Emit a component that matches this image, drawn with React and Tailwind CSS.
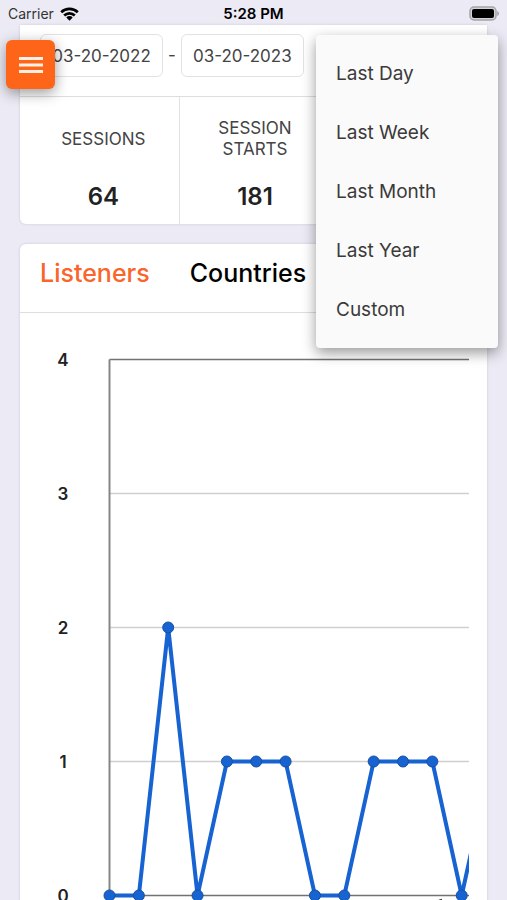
import React from 'react';

const RANGES = ['Last Day', 'Last Week', 'Last Month', 'Last Year', 'Custom'];

const STATS = [
  { label: 'SESSIONS', value: 64 },
  { label: 'SESSION STARTS', value: 181 },
];

const LISTENERS = [0, 0, 2, 0, 1, 1, 1, 0, 0, 1, 1, 1, 0, 1];

const STEP_X = 29.35;
const STEP_Y = 134;
const MAX_VALUE = 4;
const AXIS_X = 69.5;
const TOP_Y = 46.5;

const pointX = (index) => AXIS_X + index * STEP_X;
const valueY = (value) => TOP_Y + (MAX_VALUE - value) * STEP_Y;

const StatusBar = () => (
  <header className="grid h-[25px] grid-cols-3 items-center px-2 pt-[2px] leading-5 text-black">
    <div className="flex items-center gap-[6px] text-sm">
      <span className="text-[#333]">Carrier</span>
      <svg width="19" height="14" viewBox="0 0 19 14" aria-hidden="true">
        <g fill="none" stroke="currentColor" strokeWidth="2.7">
          <path d="M1.2 5.2a12 12 0 0 1 16.6 0" />
          <path d="M4.2 8.5a7.6 7.6 0 0 1 10.6 0" />
        </g>
        <path d="M6.3 10.4a4.6 4.6 0 0 1 6.4 0L9.5 13.7z" fill="currentColor" />
      </svg>
    </div>
    <span className="text-center text-[15px] font-semibold">5:28 PM</span>
    <svg className="justify-self-end" width="30" height="15" viewBox="0 0 30 15" aria-hidden="true">
      <rect x="1" y="1" width="26" height="13" rx="4" fill="#d4d3d8" stroke="#a5a4a9" strokeWidth="1.5" />
      <rect x="3" y="3" width="22" height="9" rx="2" fill="#000" />
      <path d="M28.2 5v5c1.2-.4 1.800-1.300 1.800-2.500s-.6-2.100-1.800-2.500z" fill="#a5a4a9" />
    </svg>
  </header>
);

const DateField = ({ label, value }) => (
  <input
    type="text"
    aria-label={label}
    defaultValue={value}
    className="h-[43px] w-[123px] rounded-md border border-[#e2e2e2] bg-white text-center text-[17px] text-[#444] focus:outline-none"
  />
);

const MenuButton = () => (
  <button
    type="button"
    aria-label="Open menu"
    className="absolute top-10 left-[6px] flex h-[49px] w-[49px] items-center justify-center rounded-md bg-[#ff6519] text-[#fff0e6] shadow-[0_4px_14px_rgba(0,0,0,0.4)]"
  >
    <svg width="24" height="18" viewBox="0 0 24 18" fill="none" stroke="currentColor" strokeWidth="2.8" aria-hidden="true">
      <path d="M0 2.500h24M0 9h24M0 15.500h24" />
    </svg>
  </button>
);

const RangeMenu = () => (
  <ul
    role="menu"
    className="absolute top-[35px] right-[9px] w-[182px] rounded-sm bg-[#fafafa] pt-[10px] pb-2 shadow-[0_5px_14px_rgba(0,0,0,0.4)]"
  >
    {RANGES.map((range) => (
      <li key={range} role="none">
        <button type="button" role="menuitem" className="block h-[59px] w-full px-5 text-left text-[19px] text-[#3a3a3a]">
          {range}
        </button>
      </li>
    ))}
  </ul>
);

const ListenersChart = () => {
  const line = LISTENERS.map((value, index) => `${pointX(index)},${valueY(value)}`).join(' ');

  return (
    <div className="mr-[18px] ml-5 overflow-hidden">
      <svg width="480" height="640" className="max-w-none" role="img" aria-label="Listeners">
        {[0, 1, 2, 3, 4].map((value) => (
          <g key={value}>
            <line
              x1={AXIS_X}
              x2="480"
              y1={valueY(value)}
              y2={valueY(value)}
              stroke={value === 0 || value === MAX_VALUE ? '#6f7173' : '#cfcfcf'}
              strokeWidth="1.5"
            />
            <text x="23" y={valueY(value) + 6} textAnchor="middle" className="fill-[#222] text-[17px] font-semibold">
              {value}
            </text>
          </g>
        ))}
        <line x1={AXIS_X} x2={AXIS_X} y1={valueY(MAX_VALUE)} y2={valueY(0)} stroke="#858787" strokeWidth="2" />
        <path d="M399 587.500l3-1" stroke="#333" strokeWidth="1.5" />
        <polyline points={line} fill="none" stroke="#1763d2" strokeWidth="4" />
        {LISTENERS.map((value, index) => (
          <circle key={index} cx={pointX(index)} cy={valueY(value)} r="5.500" fill="#1763d2" stroke="#184f9f" strokeWidth="1" />
        ))}
      </svg>
    </div>
  );
};

const App = () => {
  return (
    <div className="relative h-screen overflow-hidden bg-[#ecebf5] font-['Inter','Liberation_Sans',sans-serif]">
      <StatusBar />
      <main className="flex flex-col gap-5 px-5">
        <section className="rounded-b-md bg-white shadow-[0_0_3px_rgba(0,0,0,0.15)]">
          <div className="flex items-center gap-[5px] border-b border-[#dedede] px-5 pt-[9px] pb-[19px] text-[17px] text-[#444]">
            <DateField label="From" value="03-20-2022" />
            <span>-</span>
            <DateField label="To" value="03-20-2023" />
          </div>
          <dl className="grid grid-cols-3 pr-1 pl-2">
            {STATS.map((stat) => (
              <div key={stat.label} className="flex h-[127px] flex-col items-center border-r border-[#e2e2e2] px-8 pt-[11px] text-center">
                <dt className="flex h-[62px] items-center text-[17px] leading-[21px] text-[#444]">{stat.label}</dt>
                <dd className="pt-[11px] text-2xl font-semibold text-[#222]">{stat.value}</dd>
              </div>
            ))}
          </dl>
        </section>

        <section className="rounded-t-md bg-white shadow-[0_0_3px_rgba(0,0,0,0.15)]">
          <nav className="flex h-[69px] items-center gap-10 border-b border-[#dedede] px-5 pb-[9px] text-[25px] font-medium">
            <a href="#listeners" className="text-[#f9652a]">Listeners</a>
            <a href="#countries" className="text-black">Countries</a>
          </nav>
          <ListenersChart />
        </section>
      </main>
      <MenuButton />
      <RangeMenu />
    </div>
  );
};

export default App;
